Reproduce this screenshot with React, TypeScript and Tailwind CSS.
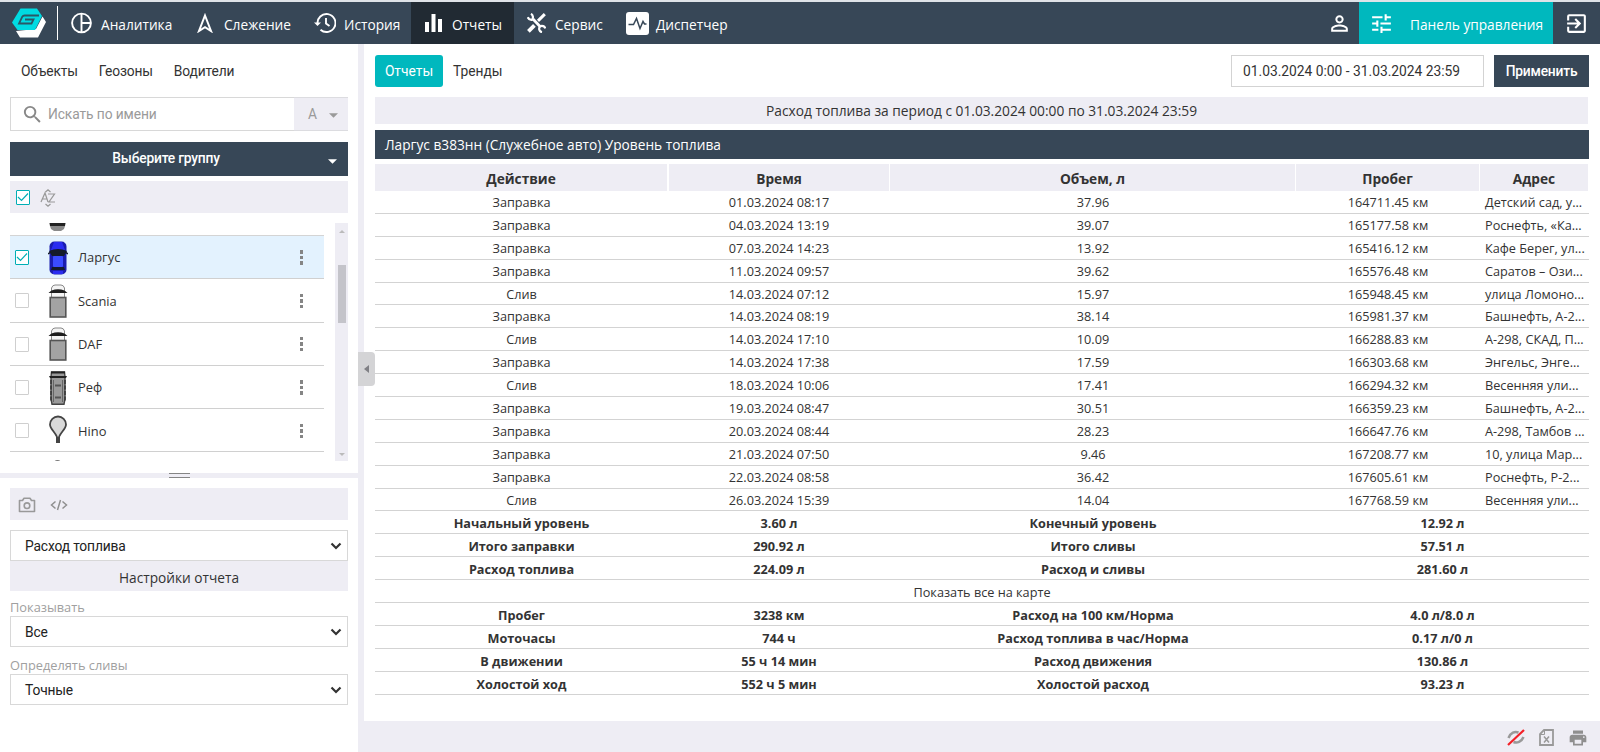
import React from 'react';
import clsx from 'clsx';
import { MdExitToApp, MdPersonOutline, MdPrint, MdSearch, MdTune } from 'react-icons/md';

const navItems = [
  { label: 'Аналитика', icon: AnalyticsIcon, className: 'w-[126px] pl-[13px] gap-[9px]' },
  { label: 'Слежение', icon: TrackIcon, className: 'w-[119px] pl-[13px] gap-[11px]' },
  { label: 'История', icon: HistoryIcon, className: 'w-[108px] pl-[11px] gap-[8px]' },
  { label: 'Отчеты', icon: BarsIcon, className: 'w-[103px] pl-3.5 gap-2.5 bg-[#212a33]' },
  { label: 'Сервис', icon: ToolsIcon, className: 'w-[98px] pl-[13px] gap-[9px]' },
  { label: 'Диспетчер', icon: PulseIcon, className: 'w-[130px] pl-3.5 gap-[7px]' },
];

const vehicles = [
  { name: 'Ларгус', icon: CarIcon, checked: true },
  { name: 'Scania', icon: TruckIcon, checked: false },
  { name: 'DAF', icon: TruckIcon, checked: false },
  { name: 'Реф', icon: VanIcon, checked: false },
  { name: 'Hino', icon: PinIcon, checked: false },
];

const events = [
  ['Заправка', '01.03.2024 08:17', '37.96', '164711.45 км', 'Детский сад, у...'],
  ['Заправка', '04.03.2024 13:19', '39.07', '165177.58 км', 'Роснефть, «Ка...'],
  ['Заправка', '07.03.2024 14:23', '13.92', '165416.12 км', 'Кафе Берег, ул...'],
  ['Заправка', '11.03.2024 09:57', '39.62', '165576.48 км', 'Саратов – Ози...'],
  ['Слив', '14.03.2024 07:12', '15.97', '165948.45 км', 'улица Ломоно...'],
  ['Заправка', '14.03.2024 08:19', '38.14', '165981.37 км', 'Башнефть, А-2...'],
  ['Слив', '14.03.2024 17:10', '10.09', '166288.83 км', 'А-298, СКАД, П...'],
  ['Заправка', '14.03.2024 17:38', '17.59', '166303.68 км', 'Энгельс, Энге...'],
  ['Слив', '18.03.2024 10:06', '17.41', '166294.32 км', 'Весенняя ули...'],
  ['Заправка', '19.03.2024 08:47', '30.51', '166359.23 км', 'Башнефть, А-2...'],
  ['Заправка', '20.03.2024 08:44', '28.23', '166647.76 км', 'А-298, Тамбов ...'],
  ['Заправка', '21.03.2024 07:50', '9.46', '167208.77 км', '10, улица Мар...'],
  ['Заправка', '22.03.2024 08:58', '36.42', '167605.61 км', 'Роснефть, Р-2...'],
  ['Слив', '26.03.2024 15:39', '14.04', '167768.59 км', 'Весенняя ули...'],
];

const totals = [
  ['Начальный уровень', '3.60 л', 'Конечный уровень', '12.92 л'],
  ['Итого заправки', '290.92 л', 'Итого сливы', '57.51 л'],
  ['Расход топлива', '224.09 л', 'Расход и сливы', '281.60 л'],
];

const mileage = [
  ['Пробег', '3238 км', 'Расход на 100 км/Норма', '4.0 л/8.0 л'],
  ['Моточасы', '744 ч', 'Расход топлива в час/Норма', '0.17 л/0 л'],
  ['В движении', '55 ч 14 мин', 'Расход движения', '130.86 л'],
  ['Холостой ход', '552 ч 5 мин', 'Холостой расход', '93.23 л'],
];

function Logo() {
  return (
    <svg width="36" height="32" viewBox="0 0 36 32" className="shrink-0">
      <path d="m5 24 4 6.500h18L35 15l-3.500-5.500L25 22z" fill="#fff" />
      <path d="M9.500 1.500h16.500L31 9l-7 14H6.500L1 15.500z" fill="#00dbe2" />
      <path d="M28 8.500H13.500Q12 8.500 11.300 9.700L8 16.500h12.500l2-4H14" fill="none" stroke="#2b5866" strokeWidth="1.800" />
    </svg>
  );
}

function AnalyticsIcon() {
  return (
    <svg width="21" height="22" viewBox="0 0 21 22" fill="none" stroke="#fff" strokeWidth="1.900">
      <circle cx="10.5" cy="11" r="9.4" />
      <path d="M10.5 2v18M10.5 11h9" />
    </svg>
  );
}

function TrackIcon() {
  return (
    <svg width="16" height="20" viewBox="0 0 16 20" fill="none" stroke="#fff" strokeWidth="2">
      <path d="M8 2.5 14 18 8 14.2 2 18z" />
    </svg>
  );
}

function HistoryIcon() {
  return (
    <svg width="22" height="22" viewBox="0 0 22 22" fill="none" stroke="#fff" strokeWidth="1.900">
      <path d="M3.500 12A9 9 0 1 1 6.500 17.800M12 6v5.500l3.500 2.500" />
      <path d="M0 10.500h7L3.500 14z" fill="#fff" stroke="none" />
    </svg>
  );
}

function BarsIcon() {
  return (
    <svg width="17" height="18" viewBox="0 0 17 18" fill="#fff">
      <path d="M0 8h4v10H0zM6.5 0h4v18h-4zM13 5h4v13h-4z" />
    </svg>
  );
}

function ToolsIcon() {
  return (
    <svg width="19" height="20" viewBox="0 0 19 20" fill="none" stroke="#fff">
      <path d="m6 6 7.500 8" strokeWidth="2.8" />
      <path d="M4 .8A4 4 0 0 1 5 6.800 4 4 0 0 1 .8 4.2" strokeWidth="2.2" />
      <path d="M18.300 15.500A3.500 3.500 0 0 0 13 13.500a3.500 3.500 0 0 0 2 5.700" strokeWidth="2.2" />
      <path d="M17.8 1.200 11 7.800" strokeWidth="3" />
      <path d="m7.400 12.400-6 6" strokeWidth="3.800" />
    </svg>
  );
}

function PulseIcon() {
  return (
    <svg width="23" height="23" viewBox="0 0 23 23">
      <rect width="23" height="23" rx="3" fill="#fff" />
      <path d="M2.5 12.500h5l3-6 3.500 10 3-7 1.500 2.500h2" fill="none" stroke="#374757" strokeWidth="1.5" />
    </svg>
  );
}

function CarIcon() {
  return (
    <svg width="20" height="34" viewBox="0 0 20 34">
      <rect x="1.5" y=".5" width="17" height="33" rx="5" fill="#1a1cae" />
      <path d="M6 1h8l3 8H3z" fill="#2a2cf0" />
      <path d="M1 10q9-4 18 0l-3 5H4z" fill="#151b2b" />
      <rect x="5" y="15" width="10" height="11" rx="1" fill="#3b4cff" />
      <path d="M4 26h12l1 3H3z" fill="#151b2b" />
      <path d="M5 30h10v3H5z" fill="#2a2cf0" />
      <path d="m0 13 3-2M20 13l-3-2" stroke="#151b2b" strokeWidth="1.5" />
    </svg>
  );
}

function TruckIcon() {
  return (
    <svg width="20" height="34" viewBox="0 0 20 34">
      <path d="M3.500 4Q4.500 1 7 1h6q2.500 0 3.500 3v9h-13z" fill="#f4f4f4" stroke="#888" />
      <path d="M3.500 6.500q6.500-2.500 13 0L19.500 9H.5z" fill="#1d1d1d" />
      <path d="M4 10h12v3H4z" fill="#f4f4f4" />
      <rect x="2.2" y="13.5" width="15.6" height="19.5" fill="#a3a3a3" stroke="#555" strokeWidth="1.6" />
    </svg>
  );
}

function VanIcon() {
  return (
    <svg width="20" height="34" viewBox="0 0 20 34">
      <path d="M3.500 1h13l.5 5v22l-1 5.300H4L3 28V6z" fill="#9a9a9a" stroke="#444" strokeWidth="1.4" />
      <path d="M3 .5h14v2H3zM1 5h18l-1 2H2z" fill="#222" />
      <path d="M5.500 9v22M14.500 9v22" stroke="#666" />
      <path d="M3 9v22M17 9v22" stroke="#333" strokeWidth="1.4" strokeDasharray="4 1.500" />
      <path d="M7 14.500h6M7 26.500h6" stroke="#555" strokeWidth="1.8" />
    </svg>
  );
}

function PinIcon() {
  return (
    <svg width="20" height="34" viewBox="0 0 20 34">
      <path d="M10 18v11" stroke="#444" strokeWidth="4" />
      <path
        d="M10 27C9.500 19 2 16 2 10.500a8 8 0 0 1 16 0c0 5.500-7.500 8.500-8 16.500"
        fill="#d9d9d9"
        stroke="#444"
        strokeWidth="1.8"
      />
    </svg>
  );
}

function Caret({ className }: { className?: string }) {
  return (
    <svg width="10" height="5" viewBox="0 0 10 5" className={clsx('shrink-0', className)}>
      <path d="M0 0h10L5 5z" fill="currentColor" />
    </svg>
  );
}

function Checkbox({ checked = false }: { checked?: boolean }) {
  return (
    <span
      className={clsx(
        'block h-[15px] w-3.5 shrink-0 rounded-[1px] border bg-white',
        checked ? 'border-[#00aeb5]' : 'border-[#cfcfcf]'
      )}
    >
      {checked && (
        <svg width="12" height="13" viewBox="0 0 12 13" fill="none" stroke="#00aeb5" strokeWidth="1.2">
          <path d="m1 6 3.500 3.500L11 2.500" />
        </svg>
      )}
    </span>
  );
}

function SelectBox({ value }: { value: string }) {
  return (
    <div className="flex h-[31px] items-center justify-between border border-[#d8d8d8] bg-white pr-[5px] pl-3.5 font-['Roboto',sans-serif] text-[13.8px] tracking-[-0.15px] text-[#222]">
      <span className="pt-0.5">{value}</span>
      <svg width="12" height="8" viewBox="0 0 12 8" fill="none" stroke="#333" strokeWidth="2.2">
        <path d="m1.500 1.500 4.500 4.500 4.500-4.500" />
      </svg>
    </div>
  );
}

function TopNav() {
  return (
    <header className="flex h-11 items-stretch border-t-2 border-[#dfe3e8] bg-[#374757] text-[13.7px] text-white">
      <div className="my-1 flex w-[58px] items-center border-r border-white pl-[11px]">
        <Logo />
      </div>
      {navItems.map(({ label, icon: Icon, className }) => (
        <div key={label} className={clsx('flex items-center whitespace-nowrap', className)}>
          <Icon />
          <span className="pt-1">{label}</span>
        </div>
      ))}
      <div className="ml-auto flex items-center pr-[7px]">
        <MdPersonOutline size={25} />
      </div>
      <div className="flex w-[194px] items-center bg-[#00b8be] pl-2.5 whitespace-nowrap">
        <MdTune size={25} />
        <span className="pt-1 pl-4">Панель управления</span>
      </div>
      <div className="flex w-[47px] items-center justify-center">
        <MdExitToApp size={25} />
      </div>
    </header>
  );
}

function ObjectList() {
  return (
    <div className="mt-2.5 flex h-[238px] overflow-hidden">
      <div className="w-[314px]">
        <div className="flex h-[13px] items-start border-b border-[#d4d4d4] pl-[39px]">
          <svg width="17" height="8" viewBox="0 0 17 8">
            <path d="M0 0h17l-2 6-3 2H5L2 6z" fill="#8a8a8a" />
            <path d="M1 0h15v3H1z" fill="#222" />
          </svg>
        </div>
        {vehicles.map(({ name, icon: Icon, checked }) => (
          <div
            key={name}
            className={clsx(
              'flex h-[43.3px] items-center border-b border-[#d0d0d0] pt-px pl-[5px]',
              checked && 'bg-[#e3f2fe]'
            )}
          >
            <Checkbox checked={checked} />
            <span className="ml-[19px]">
              <Icon />
            </span>
            <span className="ml-2.5 flex-1 pt-px text-[12.9px] text-[#333]">{name}</span>
            <span className="mr-[21px] flex flex-col gap-[2px]">
              <i className="size-[3.500px] bg-[#858585]" />
              <i className="size-[3.500px] bg-[#858585]" />
              <i className="size-[3.500px] bg-[#858585]" />
            </span>
          </div>
        ))}
        <div className="flex pt-2 pl-11">
          <span className="h-2 w-[7px] rounded-t bg-[#777]" />
        </div>
      </div>
      <div className="ml-auto flex w-[13px] flex-col items-center bg-[#eeedf4] pt-1.5 pb-1 text-[#bbb]">
        <Caret className="w-1.5 rotate-180" />
        <span className="mt-[31px] h-[58px] w-2 bg-[#c4c4ca]" />
        <Caret className="mt-auto w-1.5" />
      </div>
    </div>
  );
}

function Sidebar() {
  return (
    <aside className="flex w-[358px] shrink-0 flex-col bg-white">
      <div className="flex h-[429px] flex-col px-2.5">
        <div className="flex h-[53px] items-center gap-[21px] pt-0.5 pl-[11px] font-['Roboto',sans-serif] text-[13.8px] tracking-[-0.15px] text-[#333]">
          <span>Объекты</span>
          <span>Геозоны</span>
          <span>Водители</span>
        </div>
        <div className="flex h-[34px] font-['Roboto',sans-serif] text-[13.8px] tracking-[-0.1px] text-[#9a9a9a]">
          <div className="flex flex-1 items-center border border-r-0 border-[#d8d8d8] pl-2.5">
            <MdSearch size={23} className="text-[#888]" />
            <span className="pt-px pl-1">Искать по имени</span>
          </div>
          <div className="flex w-[54px] items-center gap-3 border-y border-[#dcdce0] bg-[#eeedf4] pl-3.5">
            <span className="pt-px">A</span>
            <Caret className="mt-0.5 w-[9px]" />
          </div>
        </div>
        <div className="mt-[11px] flex h-[34px] items-center bg-[#374757] pr-[11px] font-['Roboto',sans-serif] text-[13.8px] font-medium tracking-[-0.2px] text-white">
          <span className="flex-1 pr-1.5 pb-px text-center">Выберите группу</span>
          <Caret className="mt-1 w-[9px]" />
        </div>
        <div className="mt-[5px] flex h-8 items-center gap-2.5 bg-[#eeedf4] pt-px pl-1.5">
          <Checkbox checked />
          <svg width="16" height="18" viewBox="0 0 16 18" fill="none" stroke="#999" strokeWidth="1.2">
            <path d="m1 13 4-9 3 9M2.500 10H7M8 5h6.500L9 13h6M5.500 3 8 .8 10.500 3M5.500 15 8 17.200l2.500-2.200" />
          </svg>
        </div>
        <ObjectList />
      </div>
      <div className="flex h-[5px] flex-col items-center justify-between bg-[#eeedf4]">
        <span className="h-px w-[21px] bg-[#858585]" />
        <span className="h-px w-[21px] bg-[#858585]" />
      </div>
      <div className="flex flex-col px-2.5 pt-2.5">
        <div className="flex h-8 items-center gap-3.5 bg-[#eeedf4] pt-0.5 pl-2">
          <svg width="18" height="16" viewBox="0 0 18 16" fill="none" stroke="#999" strokeWidth="1.600">
            <path d="M1.500 3.500h3L6 1.300h6l1.500 2.200h3v11h-15z" strokeLinejoin="round" />
            <circle cx="9" cy="8.700" r="2.800" />
          </svg>
          <svg width="18" height="12" viewBox="0 0 18 12" fill="none" stroke="#8f8f8f" strokeWidth="1.500">
            <path d="M5.500 2.500 1.500 6l4 3.500M12.500 2.500l4 3.500-4 3.500M10.500 1l-3 10" />
          </svg>
        </div>
        <div className="mt-2.5">
          <SelectBox value="Расход топлива" />
        </div>
        <div className="flex h-[30px] items-center justify-center bg-[#eeedf4] pt-1 text-[13.7px] text-[#333]">
          Настройки отчета
        </div>
        <div className="flex h-[25px] items-end text-[12.8px] leading-[17px] text-[#a0a0a0]">Показывать</div>
        <SelectBox value="Все" />
        <div className="flex h-[27px] items-end text-[12.8px] leading-[17px] text-[#a0a0a0]">Определять сливы</div>
        <SelectBox value="Точные" />
      </div>
    </aside>
  );
}

const columns = 'grid grid-cols-[293px_222px_406px_184px_1fr]';

function TotalRow({ cells }: { cells: string[] }) {
  return (
    <div className={clsx(columns, 'h-[22.9px] border-b border-[#d3d3d3] text-center leading-[24px] font-bold')}>
      <span>{cells[0]}</span>
      <span>{cells[1]}</span>
      <span>{cells[2]}</span>
      <span className="col-span-2">{cells[3]}</span>
    </div>
  );
}

function Report() {
  return (
    <div className="text-[#333]">
      <div className="mt-2.5 mr-px flex h-[27px] items-center justify-center bg-[#eeedf4] pt-0.5 text-[13.75px]">
        Расход топлива за период с 01.03.2024 00:00 по 31.03.2024 23:59
      </div>
      <div className="mt-1.5 flex h-[29px] items-center bg-[#374757] pt-px pl-2.5 text-[13.7px] text-white">
        Ларгус в383нн (Служебное авто) Уровень топлива
      </div>
      <div className={clsx(columns, 'mt-[5px] h-[27px] text-center text-[13.7px] leading-[30px] font-bold')}>
        <span className="mr-px h-[27px] bg-[#eeedf4]">Действие</span>
        <span className="mx-px h-[27px] bg-[#eeedf4]">Время</span>
        <span className="mr-px h-[27px] bg-[#eeedf4]">Объем, л</span>
        <span className="mr-px h-[27px] bg-[#eeedf4]">Пробег</span>
        <span className="mr-px h-[27px] bg-[#eeedf4]">Адрес</span>
      </div>
      <div className="text-[12.7px]">
        {events.map(([action, time, volume, distance, address]) => (
          <div key={time} className={clsx(columns, 'h-[22.9px] border-b border-[#d3d3d3] text-center leading-[23.6px]')}>
            <span>{action}</span>
            <span>{time}</span>
            <span>{volume}</span>
            <span>{distance}</span>
            <span className="pl-[5px] text-left whitespace-nowrap">{address}</span>
          </div>
        ))}
        {totals.map((cells) => (
          <TotalRow key={cells[0]} cells={cells} />
        ))}
        <div className="h-[22.9px] border-b border-[#d3d3d3] text-center leading-[24px]">Показать все на карте</div>
        {mileage.map((cells) => (
          <TotalRow key={cells[0]} cells={cells} />
        ))}
      </div>
    </div>
  );
}

export default function App() {
  return (
    <div className="flex h-[752px] w-[1600px] flex-col overflow-hidden bg-white font-['Open_Sans',sans-serif]">
      <TopNav />
      <div className="flex min-h-0 flex-1">
        <Sidebar />
        <div className="relative w-1.5 shrink-0 bg-[#eeedf4]">
          {/* Collapse handle over the divider */}
          <div className="absolute top-[308px] left-0 z-10 flex h-[34px] w-[17px] items-center justify-center rounded-r bg-[#d4d4d6]">
            <svg width="5" height="8" viewBox="0 0 5 8">
              <path d="M5 0v8L0 4z" fill="#808085" />
            </svg>
          </div>
        </div>
        <main className="flex min-w-0 flex-1 flex-col">
          <div className="flex-1 px-[11px] pt-[11px]">
            <div className="flex h-8 items-center font-['Roboto',sans-serif] text-[13.8px] text-[#333]">
              <span className="flex h-8 w-[68px] items-center justify-center rounded-[3px] bg-[#00b8be] text-white">
                Отчеты
              </span>
              <span className="pl-2.5">Тренды</span>
              <span className="ml-auto flex h-8 w-[253px] items-center border border-[#d3d3d3] pl-[11px]">
                01.03.2024 0:00 - 31.03.2024 23:59
              </span>
              <span className="ml-2.5 flex h-8 w-[95px] items-center justify-center bg-[#374757] font-medium tracking-[-0.2px] text-white">
                Применить
              </span>
            </div>
            <Report />
          </div>
          <footer className="flex h-[31px] items-center justify-end gap-3.5 bg-[#eeedf4] pt-0.5 pr-3 text-[#8f8f8f]">
            <svg width="18" height="17" viewBox="0 0 18 17" fill="none">
              <path d="M1.500 9C3.500 3.500 8 2 11.500 3.500M16.500 8c-2 5-6.500 6.500-10 5" stroke="#999" strokeWidth="2.500" />
              <path d="M1 16 17 1" stroke="#f32027" strokeWidth="2.200" />
            </svg>
            <svg width="15" height="17" viewBox="0 0 15 17" fill="none" stroke="#999">
              <path d="M5 1h9v15H1V5z" strokeWidth="1.800" />
              <path d="M1 5.500h4.500V1" />
              <path d="m5 7.500 5 6M10 7.500l-5 6" strokeWidth="1.500" />
            </svg>
            <MdPrint size={20} />
          </footer>
        </main>
      </div>
    </div>
  );
}
